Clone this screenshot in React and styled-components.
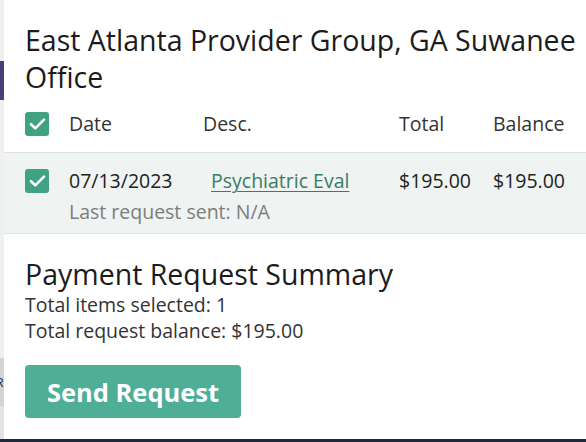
import styled, { createGlobalStyle } from "styled-components";

const GlobalStyle = createGlobalStyle`
  html, body {
    margin: 0;
    padding: 0;
    background: #ffffff;
  }
  body {
    font-family: "Open Sans", "Noto Sans", sans-serif;
    color: #222;
  }
`;

const Page = styled.div`
  width: 586px;
  height: 442px;
  display: flex;
  flex-direction: column;
  overflow: hidden;
`;

const Main = styled.div`
  flex: 1;
  display: flex;
  min-height: 0;
`;

const BottomBar = styled.div`
  height: 3px;
  background: #1e2940;
`;

const Edge = styled.div`
  width: 4px;
  display: flex;
  flex-direction: column;
  overflow: hidden;
`;

const EdgePart = styled.div`
  height: ${(p) => p.$h}px;
  flex: ${(p) => (p.$h ? "none" : 1)};
  background: ${(p) => p.$bg};
  font-family: "Liberation Sans", sans-serif;
  font-size: 13px;
  color: #1f3a5f;
  display: flex;
  align-items: center;
  justify-content: flex-end;
`;

const Panel = styled.div`
  flex: 1;
  background: #ffffff;
  display: flex;
  flex-direction: column;
`;

const Title = styled.h1`
  margin: 0;
  padding: 22px 0 0 21px;
  font-size: 28.5px;
  font-weight: 400;
  line-height: 37px;
  color: #1c1c1c;
`;

const Grid = styled.div`
  display: grid;
  grid-template-columns: 44px 134px 196px 94px 1fr;
  align-items: center;
  padding-left: 21px;
  font-size: 19.5px;
  line-height: 24px;
`;

const HeadRow = styled(Grid)`
  margin-top: 16px;
  color: #333;
`;

const Cell = styled.div`
  padding-left: ${(p) => p.$pad || 0}px;
  white-space: nowrap;
`;

const Row = styled.div`
  margin-top: 16px;
  background: #eff3f2;
  border-top: 1px solid #dde2e0;
  border-bottom: 1px solid #dde2e0;
  padding: 16px 0 9px;
`;

const DataRow = styled(Grid)`
  color: #222;
`;

const Sub = styled.div`
  padding-left: 65px;
  margin-top: 7px;
  font-size: 19.5px;
  line-height: 24px;
  color: #7d7d7d;
`;

const Link = styled.a`
  color: #3b7d63;
  text-decoration: underline;
  text-underline-offset: 3px;
  text-decoration-thickness: 1px;
  cursor: pointer;
`;

const Box = styled.span`
  width: 24px;
  height: 24px;
  border-radius: 3px;
  background: #3fa283;
  display: flex;
  align-items: center;
  justify-content: center;
`;

const Summary = styled.div`
  padding: 22px 0 0 21px;
`;

const SummaryTitle = styled.h2`
  margin: 0;
  font-size: 28.5px;
  font-weight: 400;
  line-height: 36px;
  color: #1c1c1c;
`;

const Line = styled.div`
  font-size: 19.5px;
  line-height: 26px;
  color: #333;
`;

const Button = styled.button`
  margin: 21px 0 0 21px;
  width: 216px;
  height: 53px;
  border: none;
  border-radius: 4px;
  background: #4fae96;
  color: #fff;
  font-family: "Open Sans", "Noto Sans", sans-serif;
  font-weight: 700;
  font-size: 25.5px;
  padding: 0;
  cursor: pointer;
  align-self: flex-start;
`;

const Check = () => (
  <Box>
    <svg width="17" height="14" viewBox="0 0 17 14">
      <path
        d="M2 7.2 L6.3 11.4 L15 2.6"
        fill="none"
        stroke="#fff"
        strokeWidth="2.6"
        strokeLinecap="round"
        strokeLinejoin="round"
      />
    </svg>
  </Box>
);

export default function App() {
  return (
    <>
      <GlobalStyle />
      <Page>
        <Main>
          <Edge>
            <EdgePart $h={61} $bg="#efefef" />
            <EdgePart $h={39} $bg="#4a3f74" />
            <EdgePart $h={258} $bg="#efefef" />
            <EdgePart $h={48} $bg="#d3d3d3">R</EdgePart>
            <EdgePart $bg="#e4e4e4" />
          </Edge>
          <Panel>
            <Title>East Atlanta Provider Group, GA Suwanee Office</Title>
            <HeadRow>
              <Check />
              <Cell>Date</Cell>
              <Cell>Desc.</Cell>
              <Cell>Total</Cell>
              <Cell>Balance</Cell>
            </HeadRow>
            <Row>
              <DataRow>
                <Check />
                <Cell>07/13/2023</Cell>
                <Cell $pad={8}>
                  <Link>Psychiatric Eval</Link>
                </Cell>
                <Cell>$195.00</Cell>
                <Cell>$195.00</Cell>
              </DataRow>
              <Sub>Last request sent: N/A</Sub>
            </Row>
            <Summary>
              <SummaryTitle>Payment Request Summary</SummaryTitle>
              <Line>Total items selected: 1</Line>
              <Line>Total request balance: $195.00</Line>
            </Summary>
            <Button>Send Request</Button>
          </Panel>
        </Main>
        <BottomBar />
      </Page>
    </>
  );
}
